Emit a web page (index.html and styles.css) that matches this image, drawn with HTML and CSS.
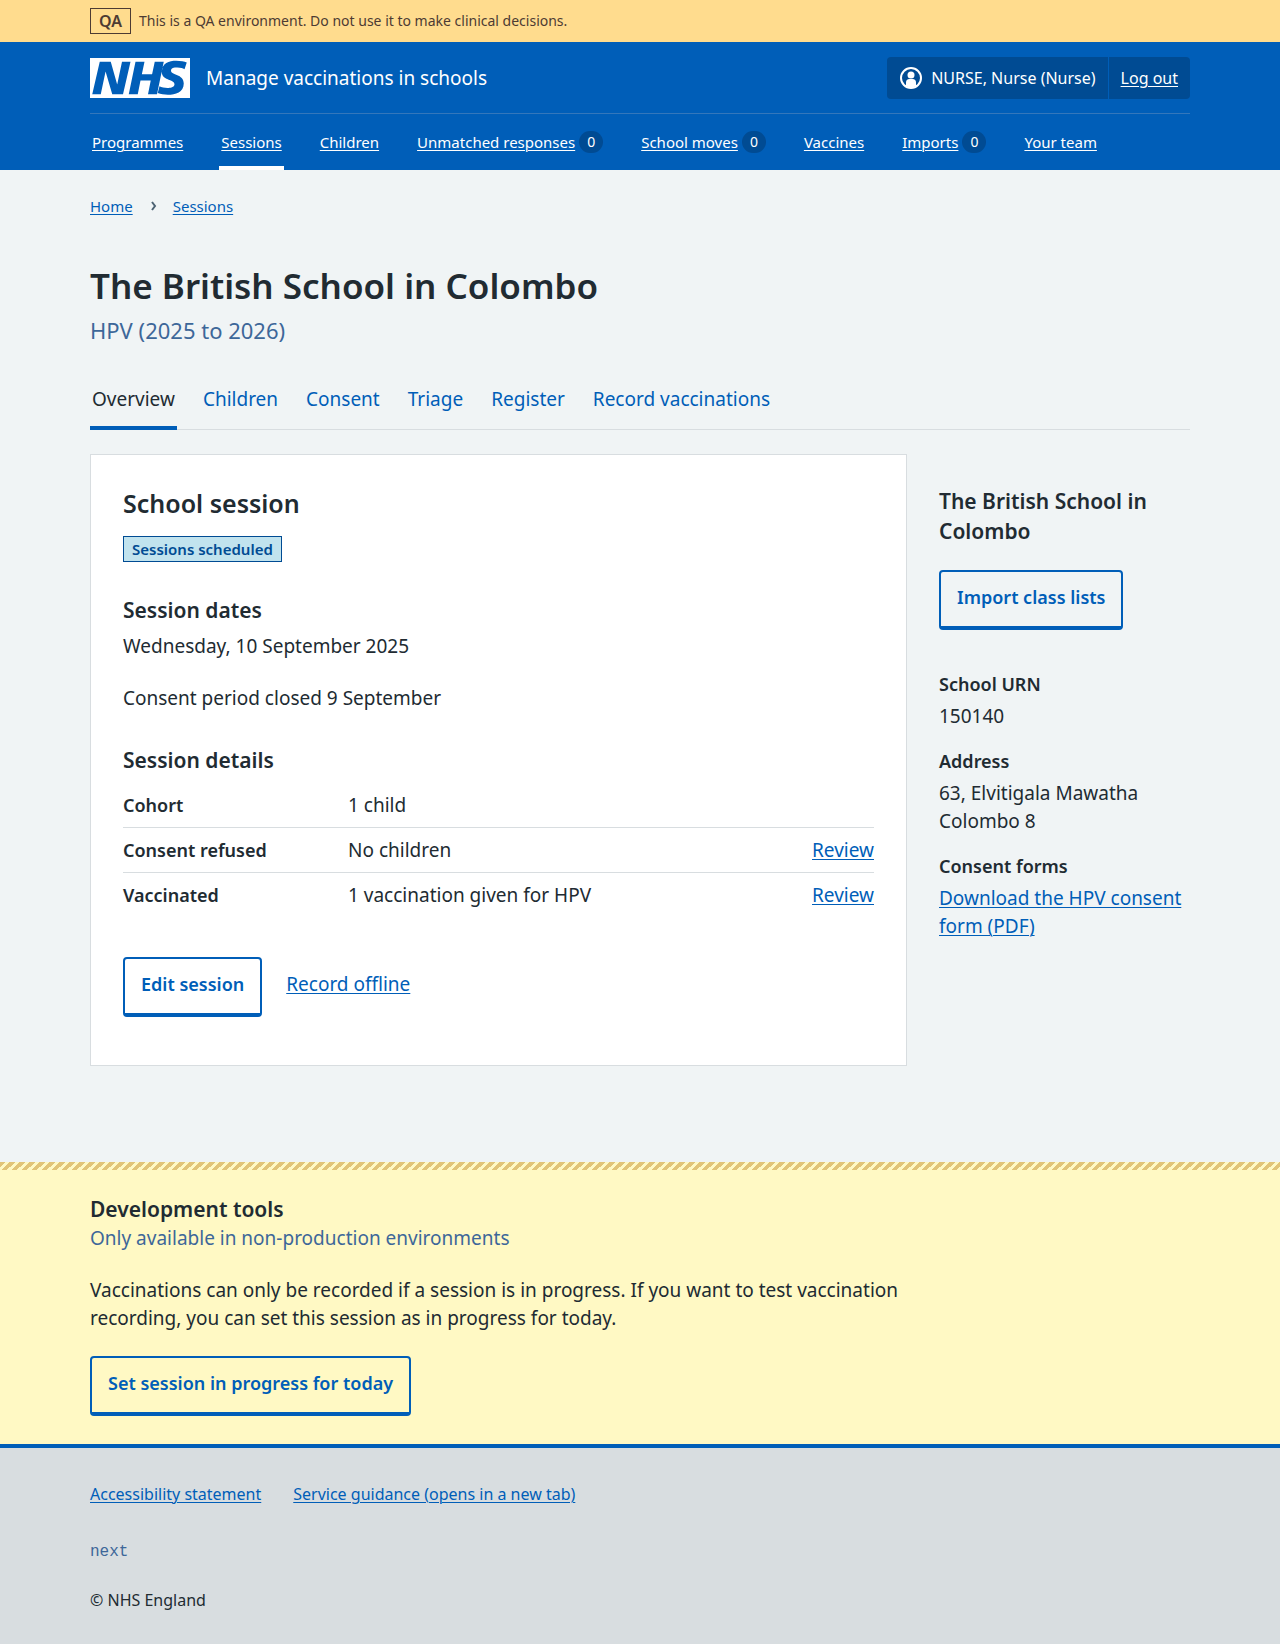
FILE: index.html
```html
<!DOCTYPE html>
<html lang="en">
<head>
<meta charset="utf-8">
<meta name="viewport" content="width=device-width, initial-scale=1">
<title>The British School in Colombo – Manage vaccinations in schools</title>
<link rel="stylesheet" href="styles.css">
</head>
<body>
<div class="environment">
  <div class="container environment-inner">
    <strong class="environment-tag">QA</strong>
    <span>This is a QA environment. Do not use it to make clinical decisions.</span>
  </div>
</div>

<header class="header">
  <div class="container">
    <div class="header-top">
      <a class="service" href="#">
        <svg class="logo" viewBox="0 0 200 80" width="100" height="40" role="img" aria-label="NHS">
          <path fill="#fff" d="M200 0v80H0V0h200Zm-27.500 5.500c-14.500 0-29 5-29 22 0 10.200 7.700 13.500 14.700 16.300l.7.300c5.400 2 10.100 3.900 10.100 8.400 0 6.500-8.500 7.500-14 7.500s-12.500-1.500-16-3.500L135.500 70c5.500 2 13.500 3.500 20 3.500 15.500 0 32-4.500 32-22.500 0-19.500-25.500-16.500-25.500-25.500 0-5.500 5.500-6.500 12.500-6.500s11 1.500 14.500 3.300L193.500 9c-4.500-2-12-3.500-21-3.500Zm-131 2h-22l-15 65h17l9.500-45h.3l13.200 45h21.500l15-65h-17l-9.500 45h-.3L41.500 7.500Zm67.500 0H91l-13.500 65h18L101 45h20.500l-5.500 27.500h18l13.500-65h-18L124.200 32.500h-20.500L109 7.500Z"/>
        </svg>
        <span class="service-name">Manage vaccinations in schools</span>
      </a>
      <nav class="account" aria-label="Account">
        <span class="account-item">
          <svg width="24" height="24" viewBox="0 0 24 24" aria-hidden="true">
            <circle cx="12" cy="12" r="10" fill="none" stroke="#fff" stroke-width="2"/>
            <circle cx="12" cy="9" r="3.500" fill="#fff"/>
            <path fill="#fff" d="M7 20v-3.500a3.500 3.500 0 0 1 3.500-3.500h3a3.500 3.500 0 0 1 3.500 3.500V20a9 9 0 0 1-10 0z"/>
          </svg>
          NURSE, Nurse (Nurse)
        </span>
        <a class="account-item" href="#">Log out</a>
      </nav>
    </div>
    <nav class="nav" aria-label="Menu">
      <div class="nav-item"><a href="#">Programmes</a></div>
      <div class="nav-item nav-item-current"><a href="#" aria-current="true">Sessions</a></div>
      <div class="nav-item"><a href="#">Children</a></div>
      <div class="nav-item"><a href="#">Unmatched responses</a><span class="count">0</span></div>
      <div class="nav-item"><a href="#">School moves</a><span class="count">0</span></div>
      <div class="nav-item"><a href="#">Vaccines</a></div>
      <div class="nav-item"><a href="#">Imports</a><span class="count">0</span></div>
      <div class="nav-item"><a href="#">Your team</a></div>
    </nav>
  </div>
</header>

<main class="container main">
  <nav class="breadcrumb" aria-label="Breadcrumb">
    <a href="#">Home</a>
    <svg width="8" height="10" viewBox="-2 0 8 10" aria-hidden="true"><path d="M1 1l3 4-3 4" fill="none" stroke="#4c6272" stroke-width="2"/></svg>
    <a href="#">Sessions</a>
  </nav>

  <h1 class="page-title">The British School in Colombo</h1>
  <p class="page-caption">HPV (2025 to 2026)</p>

  <nav class="tabs" aria-label="Session">
    <a class="tab tab-current" href="#" aria-current="page">Overview</a>
    <a class="tab" href="#">Children</a>
    <a class="tab" href="#">Consent</a>
    <a class="tab" href="#">Triage</a>
    <a class="tab" href="#">Register</a>
    <a class="tab" href="#">Record vaccinations</a>
  </nav>

  <div class="columns">
    <section class="card">
      <h2 class="card-title">School session</h2>
      <p class="tag-row"><strong class="tag">Sessions scheduled</strong></p>
      <h3 class="heading">Session dates</h3>
      <p class="text">Wednesday, 10 September 2025</p>
      <p class="text">Consent period closed 9 September</p>
      <h3 class="heading">Session details</h3>
      <dl class="summary">
        <div class="summary-row"><dt>Cohort</dt><dd>1 child</dd></div>
        <div class="summary-row"><dt>Consent refused</dt><dd>No children</dd><dd><a href="#">Review</a></dd></div>
        <div class="summary-row"><dt>Vaccinated</dt><dd>1 vaccination given for HPV</dd><dd><a href="#">Review</a></dd></div>
      </dl>
      <div class="actions">
        <button class="button" type="button">Edit session</button>
        <a href="#">Record offline</a>
      </div>
    </section>

    <aside class="side">
      <h2 class="heading">The British School in Colombo</h2>
      <button class="button" type="button">Import class lists</button>
      <dl class="details">
        <dt>School URN</dt>
        <dd>150140</dd>
        <dt>Address</dt>
        <dd>63, Elvitigala Mawatha<br>Colombo 8</dd>
        <dt>Consent forms</dt>
        <dd><a href="#">Download the HPV consent form (PDF)</a></dd>
      </dl>
    </aside>
  </div>
</main>

<section class="devtools">
  <div class="container">
    <h2 class="heading">Development tools</h2>
    <p class="devtools-note">Only available in non-production environments</p>
    <p class="devtools-text">Vaccinations can only be recorded if a session is in progress. If you want to test vaccination recording, you can set this session as in progress for today.</p>
    <button class="button" type="button">Set session in progress for today</button>
  </div>
</section>

<footer class="footer">
  <div class="container">
    <nav class="footer-links" aria-label="Footer">
      <a href="#">Accessibility statement</a>
      <a href="#">Service guidance (opens in a new tab)</a>
    </nav>
    <p class="footer-version">next</p>
    <p class="footer-copyright">© NHS England</p>
  </div>
</footer>
</body>
</html>
```

FILE: styles.css
```css
* {
  box-sizing: border-box;
}

body {
  margin: 0;
  background: #f0f4f5;
  color: #212b32;
  font-family: "Noto Sans", "Open Sans", sans-serif;
  font-size: 19px;
  line-height: 28px;
}

h1, h2, h3, p, dl, dd {
  margin: 0;
}

a {
  color: #005eb8;
  text-decoration-thickness: 1px;
  text-underline-offset: 2px;
}

.container {
  max-width: 1100px;
  margin: 0 auto;
}

/* Environment banner */
.environment {
  padding: 8px 0;
  background: #ffdc8e;
  color: #4d3b33;
  font-size: 14px;
  line-height: 26px;
}

.environment-inner {
  display: flex;
  align-items: center;
  gap: 8px;
}

.environment-tag {
  padding: 0 8px;
  border: 1px solid;
  font-size: 16px;
  font-weight: 600;
  line-height: 24px;
}

/* Header */
.header {
  background: #005eb8;
  color: #fff;
}

.header a {
  color: #fff;
}

.header-top {
  display: flex;
  align-items: center;
  justify-content: space-between;
  height: 72px;
  border-bottom: 1px solid #3477bb;
}

.header .service {
  display: flex;
  align-items: center;
  gap: 16px;
  text-decoration: none;
}

.account {
  display: flex;
  border-radius: 4px;
  background: #004b93;
  font-size: 16px;
}

.account-item {
  display: flex;
  align-items: center;
  gap: 8px;
  padding: 7px 12px;
}

.account-item + .account-item {
  border-left: 1px solid #005eb8;
}

.nav {
  display: flex;
  gap: 34px;
  font-size: 15px;
}

.nav-item {
  display: flex;
  align-items: center;
  gap: 4px;
  height: 56px;
  padding: 4px 2px 0;
  border-bottom: 4px solid transparent;
}

.nav-item-current {
  border-bottom-color: #fff;
}

.count {
  min-width: 24px;
  border-radius: 12px;
  background: #004b93;
  font-size: 14px;
  line-height: 22px;
  text-align: center;
}

/* Page heading */
.main {
  padding: 22px 0 96px;
}

.breadcrumb {
  display: flex;
  align-items: center;
  gap: 16px;
  font-size: 15px;
}

.page-title {
  margin-top: 44px;
  font-size: 35px;
  font-weight: 600;
  line-height: 44px;
}

.page-caption {
  margin-top: 6px;
  color: #3d6799;
  font-size: 22px;
  line-height: 32px;
}

.tabs {
  display: flex;
  gap: 24px;
  margin-top: 35px;
  box-shadow: inset 0 -1px #d8dde0;
}

.tab {
  padding: 4px 2px 13px;
  border-bottom: 4px solid transparent;
  text-decoration: none;
}

.tab-current {
  border-bottom-color: #005eb8;
  color: #212b32;
}

/* Content */
.columns {
  display: grid;
  grid-template-columns: minmax(0, 817fr) minmax(0, 251fr);
  gap: 32px;
  margin-top: 24px;
}

.card {
  padding: 32px;
  border: 1px solid #d8dde0;
  background: #fff;
}

.card-title {
  font-size: 25px;
  font-weight: 600;
  line-height: 32px;
}

.heading {
  font-size: 21px;
  font-weight: 600;
  line-height: 30px;
}

.tag-row {
  display: flex;
  margin: 17px 0 33px;
}

.tag {
  padding: 0 8px;
  border: 1px solid #004b93;
  background: #c1e3ee;
  color: #004b93;
  font-size: 15px;
  font-weight: 600;
  line-height: 24px;
}

.text {
  margin: 7px 0 24px;
}

.card .text + .heading {
  margin-top: 33px;
}

.summary {
  margin: 8px 0 40px;
}

.summary-row {
  display: grid;
  grid-template-columns: 225px 1fr auto;
  padding: 8px 0;
}

.summary-row + .summary-row {
  border-top: 1px solid #d8dde0;
}

dt {
  font-size: 18px;
  font-weight: 600;
}

.actions {
  display: flex;
  align-items: baseline;
  gap: 24px;
  margin-bottom: 16px;
}

.button {
  padding: 11px 16px 15px;
  border: 2px solid #005eb8;
  border-bottom-width: 4px;
  border-radius: 4px;
  background: transparent;
  color: #005eb8;
  font: inherit;
  font-size: 18px;
  font-weight: 600;
}

.side {
  padding-top: 32px;
}

.side .button {
  margin-top: 24px;
}

.details {
  margin-top: 40px;
}

.details dd {
  margin: 4px 0 17px;
}

/* Development tools */
.devtools {
  padding-bottom: 28px;
  background: #fff9c4;
}

.devtools::before {
  content: "";
  display: block;
  height: 8px;
  margin-bottom: 24px;
  background: linear-gradient(-45deg, #fff9c4 25%, #e1c478 25% 50%, #fff9c4 50% 75%, #e1c478 75%) top left / 10px 10px;
}

.devtools-note {
  color: #3d6799;
}

.devtools-text {
  max-width: 817px;
  margin: 24px 0;
}

/* Footer */
.footer {
  padding: 32px 0 30px;
  border-top: 4px solid #005eb8;
  background: #d8dde0;
  font-size: 16px;
}

.footer-links {
  display: flex;
  flex-wrap: wrap;
  gap: 32px;
}

.footer-version {
  margin: 30px 0 20px;
  color: #3d6799;
  font-family: "Liberation Mono", monospace;
}
```
